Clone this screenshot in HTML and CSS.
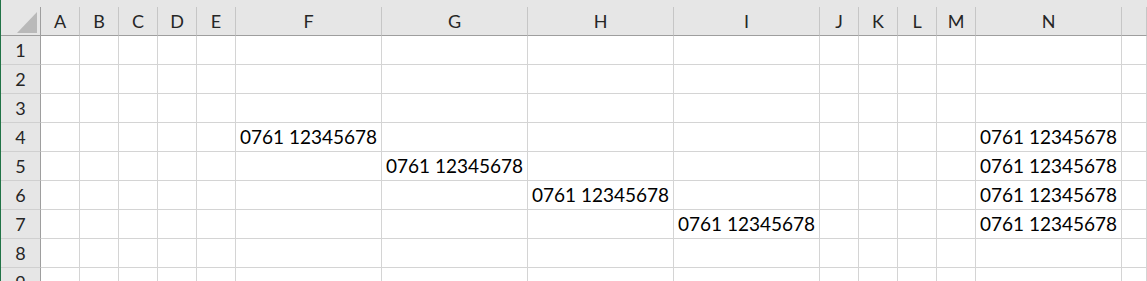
FILE: index.html
```html
<!DOCTYPE html>
<html lang="en">
<head>
    <meta charset="UTF-8">
    <meta name="viewport" content="width=device-width, initial-scale=1.0">
    <title>Sheet1</title>
    <link rel="stylesheet" href="styles.css">
</head>
<body>
    <div class="sheet">
        <div class="top-strip"></div>

        <div class="row head">
            <div class="corner"><span class="tri"></span></div>
            <div>A</div><div>B</div><div>C</div><div>D</div><div>E</div>
            <div>F</div><div>G</div><div>H</div><div>I</div>
            <div>J</div><div>K</div><div>L</div><div>M</div>
            <div>N</div><div></div>
        </div>

        <div class="row">
            <div class="num">1</div>
            <div></div><div></div><div></div><div></div><div></div>
            <div></div><div></div><div></div><div></div>
            <div></div><div></div><div></div><div></div>
            <div></div><div></div>
        </div>
        <div class="row">
            <div class="num">2</div>
            <div></div><div></div><div></div><div></div><div></div>
            <div></div><div></div><div></div><div></div>
            <div></div><div></div><div></div><div></div>
            <div></div><div></div>
        </div>
        <div class="row">
            <div class="num">3</div>
            <div></div><div></div><div></div><div></div><div></div>
            <div></div><div></div><div></div><div></div>
            <div></div><div></div><div></div><div></div>
            <div></div><div></div>
        </div>
        <div class="row">
            <div class="num">4</div>
            <div></div><div></div><div></div><div></div><div></div>
            <div>0761 12345678</div><div></div><div></div><div></div>
            <div></div><div></div><div></div><div></div>
            <div>0761 12345678</div><div></div>
        </div>
        <div class="row">
            <div class="num">5</div>
            <div></div><div></div><div></div><div></div><div></div>
            <div></div><div>0761 12345678</div><div></div><div></div>
            <div></div><div></div><div></div><div></div>
            <div>0761 12345678</div><div></div>
        </div>
        <div class="row">
            <div class="num">6</div>
            <div></div><div></div><div></div><div></div><div></div>
            <div></div><div></div><div>0761 12345678</div><div></div>
            <div></div><div></div><div></div><div></div>
            <div>0761 12345678</div><div></div>
        </div>
        <div class="row">
            <div class="num">7</div>
            <div></div><div></div><div></div><div></div><div></div>
            <div></div><div></div><div></div><div>0761 12345678</div>
            <div></div><div></div><div></div><div></div>
            <div>0761 12345678</div><div></div>
        </div>
        <div class="row">
            <div class="num">8</div>
            <div></div><div></div><div></div><div></div><div></div>
            <div></div><div></div><div></div><div></div>
            <div></div><div></div><div></div><div></div>
            <div></div><div></div>
        </div>
        <div class="row">
            <div class="num">9</div>
            <div></div><div></div><div></div><div></div><div></div>
            <div></div><div></div><div></div><div></div>
            <div></div><div></div><div></div><div></div>
            <div></div><div></div>
        </div>
    </div>
</body>
</html>
```

FILE: styles.css
```css
html, body {
    margin: 0;
    padding: 0;
    height: 281px;
    overflow: hidden;
    background: #fff;
}

body {
    font-family: Lato, "Open Sans", sans-serif;
    color: #000;
}

.sheet {
    border-left: 1px solid #217346;
}

.top-strip {
    height: 7px;
    background: #e6e6e6;
}

.row {
    display: grid;
    grid-template-columns: 40px repeat(5, 39px) repeat(4, 146px) repeat(4, 39px) 146px 1fr;
}

.row > div {
    box-sizing: border-box;
    height: 29px;
    border-right: 1px solid #d4d4d4;
    border-bottom: 1px solid #d4d4d4;
    padding: 0 4px;
    font-size: 19px;
    line-height: 28px;
    white-space: nowrap;
    overflow: hidden;
}

.head > div {
    background: #e6e6e6;
    border-right-color: #c6c6c6;
    border-bottom-color: #9e9e9e;
    text-align: center;
    font-size: 18px;
    color: #262626;
    padding: 0;
}

.row > .num {
    background: #e6e6e6;
    border-right-color: #9e9e9e;
    border-bottom-color: #d0d0d0;
    text-align: center;
    font-size: 18px;
    color: #262626;
    padding: 0;
}

.head > .corner {
    border-right-color: #9e9e9e;
    display: flex;
    justify-content: flex-end;
    align-items: flex-end;
    padding: 0 3px 2px 0;
}

.tri {
    width: 20px;
    height: 21px;
    background: #b9b9b9;
    clip-path: polygon(100% 0, 100% 100%, 0 100%);
}
```
